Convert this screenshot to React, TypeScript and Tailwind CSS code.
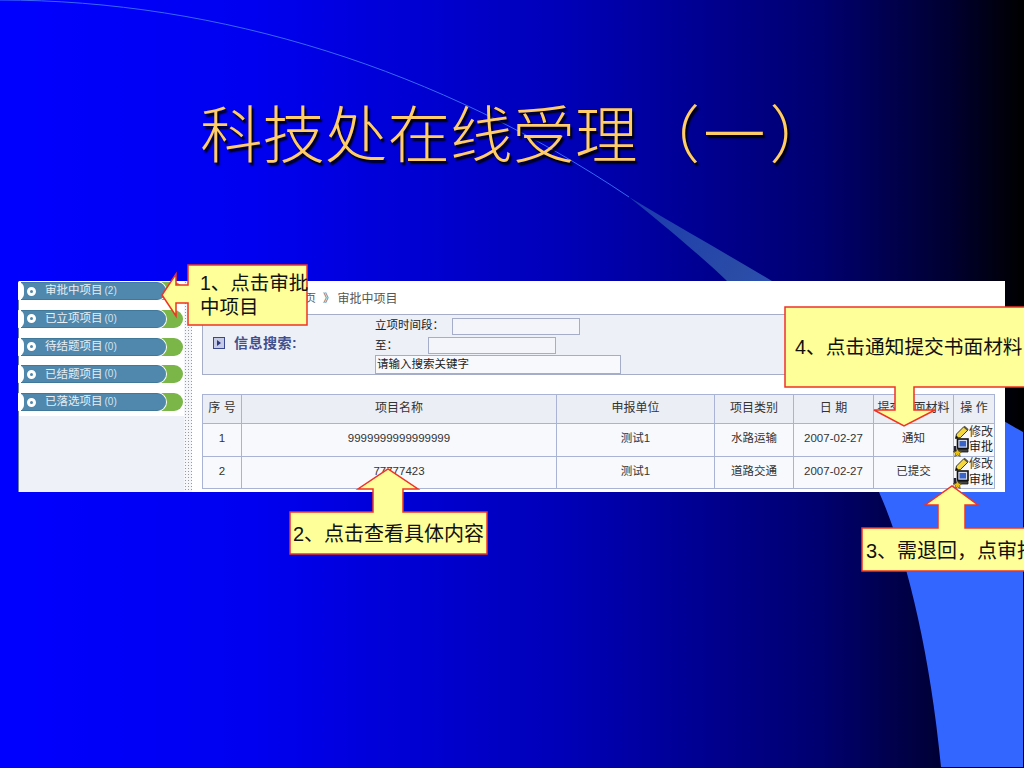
import React from "react";

const sideItems = [
  ["审批中项目", "(2)"],
  ["已立项项目", "(0)"],
  ["待结题项目", "(0)"],
  ["已结题项目", "(0)"],
  ["已落选项目", "(0)"],
];

function Pill({ label, count }: { label: string; count: string }) {
  return (
    <div className="relative h-[18px] w-[162px] ml-[2px]">
      <div className="absolute right-0 inset-y-0 w-[30px] rounded-r-full bg-[#7ab648]" />
      <div className="relative h-full w-[145px] rounded-r-full bg-[#5088ad] border-y border-[#3f7899] ring-1 ring-white flex items-center">
        <span className="absolute -left-[3px] -top-px h-[18px] w-[6px] rounded-r-full bg-white" />
        <span className="ml-[6px] h-[9px] w-[9px] rounded-full border-[3px] border-white bg-[#5088ad]" />
        <span className="ml-[9px] text-[11.5px] leading-none text-[#e6eff5] whitespace-nowrap">{label}</span>
        <span className="ml-[2px] text-[10px] leading-none text-[#d5e3ec]">{count}</span>
      </div>
    </div>
  );
}

function Pencil() {
  return (
    <svg viewBox="0 0 14 14" className="h-[14px] w-[14px] shrink-0">
      <path d="M0.5 13.5 L1.5 9 L9 1.5 L13 5 L5.5 12.5 Z" fill="#f4d83c" stroke="#222" strokeWidth="0.9" />
      <path d="M9 1.5 L13 5" stroke="#555" strokeWidth="2" />
      <path d="M0.5 13.5 L1.3 10.5 L3.5 12.6 Z" fill="#111" />
    </svg>
  );
}

function Computer() {
  return (
    <svg viewBox="0 0 16 19" className="h-[19px] w-[16px] shrink-0 -ml-[2px]">
      <rect x="4.5" y="1" width="10.5" height="9.5" fill="#d5ddf2" stroke="#111" strokeWidth="1.6" />
      <rect x="6.5" y="3" width="6.5" height="5.5" fill="#3a63c8" />
      <path d="M4 11.5 H15 V14 H4 Z" fill="#444" stroke="#111" strokeWidth="0.8" />
      <path d="M0.8 8 H3.2 V14 H0.8 Z" fill="#223" />
      <path d="M4.5 10.5 L5.8 13.3 L8.8 13.6 L6.6 15.5 L7.3 18.5 L4.5 17 L1.7 18.5 L2.4 15.5 L0.2 13.6 L3.2 13.3 Z" fill="#e8c010" stroke="#3a2e00" strokeWidth="0.6" />
    </svg>
  );
}

function Ops() {
  return (
    <div className="flex flex-col w-[39px] text-[12px] leading-[16px]">
      <div className="flex items-center justify-end h-[14px]">
        <Pencil />
        <span className="text-[#333]">修改</span>
      </div>
      <div className="flex items-center justify-end h-[17px]">
        <Computer />
        <span className="text-[#222]">审批</span>
      </div>
    </div>
  );
}

const th = "border border-[#a9b3d3] font-normal text-[12px] text-[#333] bg-[#eceef6] p-0 pb-[2px] text-center";
const td = "border border-[#a9b3d3] font-normal text-[11.5px] text-[#333] bg-[#f8f9fd] p-0 pb-[2px] text-center";
const tdOps = "border border-[#a9b3d3] bg-[#f8f9fd] p-0 text-center";

const rows = [
  ["1", "9999999999999999", "测试1", "水路运输", "2007-02-27", "通知"],
  ["2", "77777423", "测试1", "道路交通", "2007-02-27", "已提交"],
];

export default function App() {
  return (
    <div className="relative h-[768px] w-[1024px] overflow-hidden bg-[linear-gradient(90deg,#0000ff_0%,#0000f0_25%,#0000b8_55%,#000070_80%,#000030_93%,#000000_100%)] font-['Liberation_Sans','Noto_Sans_CJK_SC',sans-serif]">
      <svg className="absolute inset-0 h-full w-full" viewBox="0 0 1024 768">
        <defs>
          <linearGradient id="fan" gradientUnits="userSpaceOnUse" x1="620" y1="190" x2="900" y2="420">
            <stop offset="0" stopColor="#1a38b0" />
            <stop offset="0.4" stopColor="#2a4ca6" />
            <stop offset="1" stopColor="#3366ff" />
          </linearGradient>
        </defs>
        <path d="M0 0 C 220 0 440 70 629 197" fill="none" stroke="#3a68f4" strokeWidth="1" />
        <path d="M629 197 C 660 222 700 255 727 281 C 790 340 850 430 879 492 C 905 550 930 650 941 767 L1023 767 L1023 432 C 950 390 860 340 772 281 C 720 250 670 222 629 197 Z" fill="url(#fan)" />
      </svg>

      <div className="relative flex flex-col">
        <h1 className="ml-[200px] mt-[99px] h-[74px] text-[62.5px] leading-[74px] font-light text-[#ffcc66] whitespace-nowrap [text-shadow:2px_3px_2px_#000]">
          科技处在线受理（<span className="ml-[3px]">一</span><span className="ml-[4px]">）</span>
        </h1>

        <div className="mt-[108px] ml-[18px] flex h-[211px] w-[987px] border-l border-[#6d7aa0] bg-white">
          <div className="w-[167px] bg-[#eef1f8]">
            <div className="flex flex-col gap-[9.75px] bg-white pt-[1px] pb-[5px]">
              {sideItems.map(([l, c]) => (
                <Pill key={l} label={l} count={c} />
              ))}
            </div>
          </div>
          <div className="w-[8px] bg-[#f4f6fa] bg-[radial-gradient(#9a9a9a_0.7px,transparent_0.8px)] bg-[length:3px_3px]" />
          <div className="flex-1 pl-[10px] pr-[10px]">
            <div className="flex h-[33px] items-center pl-[91px] pt-[3px] text-[11.5px] text-[#555] whitespace-nowrap">
              首页<span className="ml-[7px] mr-[3px]">》</span><span className="text-[12px]">审批中项目</span>
            </div>
            <div className="flex h-[61px] border border-[#a6adc8] bg-[#eef0f8]">
              <div className="flex w-[172px] items-center pl-[10px] pb-[3px]">
                <span className="flex h-[12px] w-[12px] items-center justify-center border border-[#39478f] bg-[#c5cbe6]">
                  <span className="h-0 w-0 border-y-[3px] border-l-[4px] border-y-transparent border-l-[#2b387e]" />
                </span>
                <span className="ml-[9px] text-[14px] tracking-[0.5px] font-bold text-[#414f8e]">信息搜索:</span>
              </div>
              <div className="flex flex-col pt-[1px] text-[11.5px] text-[#222]">
                <div className="flex h-[20px] items-center">
                  <span className="w-[77px]">立项时间段：</span>
                  <span className="h-[17px] w-[128px] border border-[#a6adc8] bg-[#f4f5fb]" />
                </div>
                <div className="flex h-[19px] items-center">
                  <span className="w-[53px]">至：</span>
                  <span className="h-[17px] w-[128px] border border-[#a6adc8] bg-[#f4f5fb]" />
                </div>
                <div className="flex h-[19px] w-[246px] items-center border border-[#a6adc8] bg-[#f8f9fd] pl-[1px]">
                  请输入搜索关键字
                </div>
              </div>
            </div>
            <table className="mt-[19px] w-[792px] table-fixed border-collapse">
              <colgroup>
                <col className="w-[39px]" />
                <col className="w-[315px]" />
                <col className="w-[158px]" />
                <col className="w-[79px]" />
                <col className="w-[80px]" />
                <col className="w-[80px]" />
                <col className="w-[41px]" />
              </colgroup>
              <thead>
                <tr className="h-[29px]">
                  <th className={th}>序 号</th>
                  <th className={th}>项目名称</th>
                  <th className={th}>申报单位</th>
                  <th className={th}>项目类别</th>
                  <th className={th}>日 期</th>
                  <th className={th}>提交书面材料</th>
                  <th className={th}>操 作</th>
                </tr>
              </thead>
              <tbody>
                {rows.map((r) => (
                  <tr key={r[0]} className={r[0] === "1" ? "h-[33px]" : "h-[32px]"}>
                    {r.map((c, i) => (
                      <td key={i} className={i === 1 ? `${td} text-[10.8px]` : td}>
                        {c}
                      </td>
                    ))}
                    <td className={tdOps}>
                      <Ops />
                    </td>
                  </tr>
                ))}
              </tbody>
            </table>
          </div>
        </div>
      </div>

      <svg className="absolute inset-0 h-full w-full" viewBox="0 0 1024 768">
        <g fill="#ffff99" stroke="#ee3326" strokeWidth="1.5" strokeLinejoin="miter">
          <polygon points="188,265 307,265 307,325 188,325 188,303 176,303 176,316 162,295 176,274 176,285 188,285" />
          <polygon points="785,307 1030,307 1030,387 914,387 914,410 935,410 904,426 874,410 895,410 895,387 785,387" />
          <polygon points="290,512 373,512 373,489 358,489 388,469 418,489 403,489 403,512 487,512 487,554 290,554" />
          <polygon points="862,528 938,528 938,505 925,505 952,486 978,505 965,505 965,528 1030,528 1030,571 862,571" />
        </g>
      </svg>

      <div className="absolute left-[200px] top-[271px] w-[112px] text-[19.5px] leading-[24px] text-[#111]">1、点击审批中项目</div>
      <div className="absolute left-[795px] top-[335px] whitespace-nowrap text-[19.7px] leading-[24px] text-[#111]">4、点击通知提交书面材料</div>
      <div className="absolute left-[293px] top-[522px] whitespace-nowrap text-[20px] leading-[24px] text-[#111]">2、点击查看具体内容</div>
      <div className="absolute left-[866px] top-[539px] whitespace-nowrap text-[20px] leading-[24px] text-[#111]">3、需退回，点审批</div>
    </div>
  );
}
